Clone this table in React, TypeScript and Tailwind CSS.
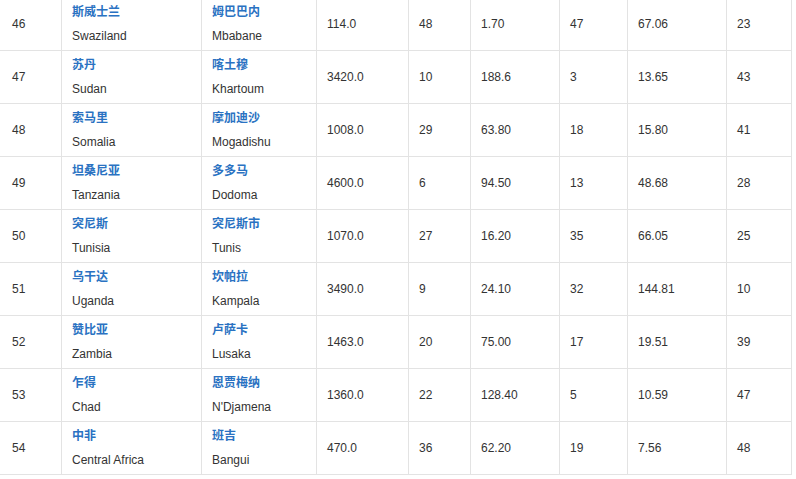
const ROWS = [
  ["46", "斯威士兰", "Swaziland", "姆巴巴内", "Mbabane", "114.0", "48", "1.70", "47", "67.06", "23"],
  ["47", "苏丹", "Sudan", "喀土穆", "Khartoum", "3420.0", "10", "188.6", "3", "13.65", "43"],
  ["48", "索马里", "Somalia", "摩加迪沙", "Mogadishu", "1008.0", "29", "63.80", "18", "15.80", "41"],
  ["49", "坦桑尼亚", "Tanzania", "多多马", "Dodoma", "4600.0", "6", "94.50", "13", "48.68", "28"],
  ["50", "突尼斯", "Tunisia", "突尼斯市", "Tunis", "1070.0", "27", "16.20", "35", "66.05", "25"],
  ["51", "乌干达", "Uganda", "坎帕拉", "Kampala", "3490.0", "9", "24.10", "32", "144.81", "10"],
  ["52", "赞比亚", "Zambia", "卢萨卡", "Lusaka", "1463.0", "20", "75.00", "17", "19.51", "39"],
  ["53", "乍得", "Chad", "恩贾梅纳", "N'Djamena", "1360.0", "22", "128.40", "5", "10.59", "47"],
  ["54", "中非", "Central Africa", "班吉", "Bangui", "470.0", "36", "62.20", "19", "7.56", "48"],
];

const cell = "border-r border-b border-[#e3e3e3] pl-[10px] flex flex-col justify-center";

const App = () => {
  return (
    <div className="w-[796px] h-[479px] overflow-hidden bg-white text-[12px] text-[#333] font-['Liberation_Sans','Noto_Sans_CJK_SC',sans-serif]">
      <div className="-mt-[2px] w-[792px] grid grid-cols-[62px_140px_115px_92px_62px_89px_68px_99px_65px] auto-rows-[53px]">
        {ROWS.map((r) => (
          <div key={r[0]} className="contents">
            <div className={`${cell} pl-[12px]`}>{r[0]}</div>
            <div className={cell}>
              <div className="leading-[24px] font-bold text-[#2a72c2]">{r[1]}</div>
              <div className="leading-[24px]">{r[2]}</div>
            </div>
            <div className={cell}>
              <div className="leading-[24px] font-bold text-[#2a72c2]">{r[3]}</div>
              <div className="leading-[24px]">{r[4]}</div>
            </div>
            {r.slice(5).map((v, i) => (
              <div key={i} className={cell}>{v}</div>
            ))}
          </div>
        ))}
      </div>
    </div>
  );
};

export default App;
